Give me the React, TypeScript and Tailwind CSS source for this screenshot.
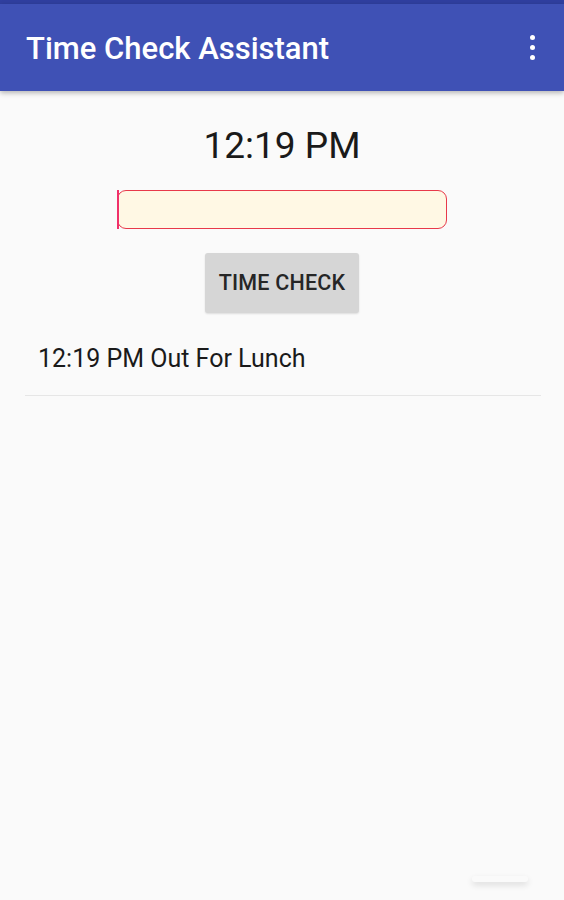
import { useState } from 'react'

export default function App() {
  const [note, setNote] = useState('')
  const entries = ['12:19 PM Out For Lunch']

  return (
    <div className="relative w-[564px] h-[900px] overflow-hidden bg-[#fafafa] font-['Roboto',sans-serif]">
      {/* Status bar strip */}
      <div className="h-[4px] bg-[#303f9f]" />

      {/* Toolbar */}
      <header className="relative z-10 h-[87px] bg-[#3f51b5] flex items-center justify-between pl-[26px] pr-[20px] shadow-[0_2px_5px_rgba(0,0,0,0.28)]">
        <h1 className="text-white text-[31px] font-medium leading-none pt-[2px]">Time Check Assistant</h1>
        <button className="flex flex-col items-center gap-[5px] w-[24px]">
          <span className="w-[5px] h-[5px] rounded-full bg-white" />
          <span className="w-[5px] h-[5px] rounded-full bg-white" />
          <span className="w-[5px] h-[5px] rounded-full bg-white" />
        </button>
      </header>

      <main className="flex flex-col items-center">
        <div className="mt-[36px] text-[37px] leading-none text-[#1a1a1a]">12:19 PM</div>

        <div className="mt-[26px] relative w-[330px] h-[39px]">
          <input
            value={note}
            onChange={(e) => setNote(e.target.value)}
            className="w-full h-full rounded-[9px] border-[1.5px] border-[#e8394a] bg-[#fff8e4] px-3 outline-none"
          />
          {/* text cursor */}
          <span className="absolute left-0 top-0 h-full w-[2px] bg-[#f0306a]" />
        </div>

        <button className="mt-[24px] w-[154px] h-[60px] rounded-[3px] bg-[#d6d6d6] shadow-[0_1px_2px_rgba(0,0,0,0.12)] text-[21.5px] font-medium text-[#262626] tracking-[0.2px]">
          TIME CHECK
        </button>

        <ul className="mt-[20px] w-full pl-[25px] pr-[23px]">
          {entries.map((entry) => (
            <li key={entry} className="h-[63px] border-b border-[#e6e6e6] flex items-center pl-[13px] pb-[10px] text-[25px] text-[#1a1a1a]">
              {entry}
            </li>
          ))}
        </ul>
      </main>

      {/* faint floating shadow bottom right */}
      <div className="absolute left-[472px] top-[876px] w-[56px] h-[6px] rounded-full shadow-[0_3px_6px_rgba(0,0,0,0.12)] bg-[#fafafa]" />
    </div>
  )
}
